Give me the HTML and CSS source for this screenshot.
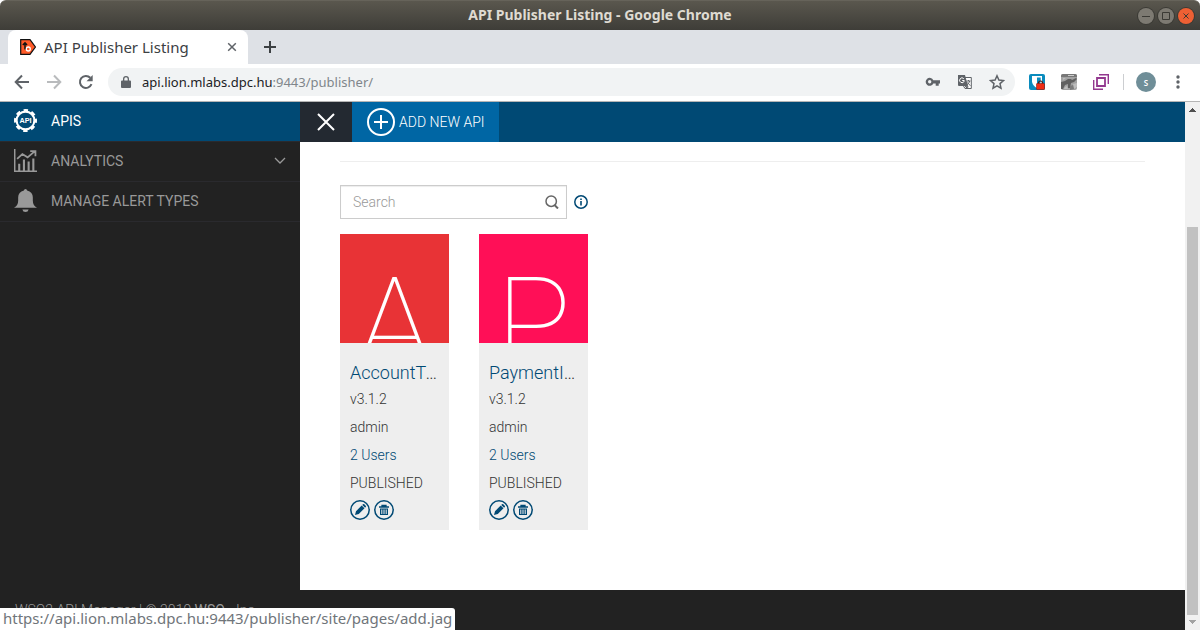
FILE: index.html
```html
<!DOCTYPE html>
<html lang="en">
<head>
<meta charset="utf-8">
<title>API Publisher Listing</title>
<link rel="stylesheet" href="styles.css">
</head>
<body>
<svg class="defs" aria-hidden="true">
  <symbol id="edit" viewBox="0 0 20 20"><circle cx="10" cy="10" r="9.2" fill="none" stroke="currentColor" stroke-width="1.5"/><path fill="currentColor" d="M5 15l1-3.8 5.700-5.700 2.800 2.800-5.700 5.700zM12.300 4.900l.6-.6q.7-.6 1.400 0l1.400 1.400q.6.7 0 1.400l-.6.6z"/></symbol>
  <symbol id="trash" viewBox="0 0 20 20"><circle cx="10" cy="10" r="9.200" fill="none" stroke="currentColor" stroke-width="1.5"/><path fill="none" stroke="currentColor" stroke-width="1.300" d="M5 7h10M8 6.500V5.500h4v1"/><path fill="currentColor" fill-rule="evenodd" d="M6 8.500h8V15H6zM7.300 9.500v4.500h1V9.500zM9.500 9.500v4.500h1V9.500zM11.700 9.500v4.500h1V9.500z"/></symbol>
</svg>

<header class="titlebar">
  <h1 class="window-title">API Publisher Listing - Google Chrome</h1>
  <div class="window-buttons">
    <button class="wbtn" aria-label="Minimize"><svg viewBox="0 0 16 16"><path d="M4 8.500h8"/></svg></button>
    <button class="wbtn" aria-label="Maximize"><svg viewBox="0 0 16 16"><path d="M4.500 4.500h7v7h-7z"/></svg></button>
    <button class="wbtn wbtn-close" aria-label="Close"><svg viewBox="0 0 16 16"><path d="M5.500 5.500l5 5m0-5l-5 5"/></svg></button>
  </div>
</header>

<div class="tabstrip">
  <div class="tab">
    <svg class="favicon" viewBox="0 0 16 16"><path d="M.7.700H10L15.400 8 10 15.300H.7z" fill="#ff5a28" stroke="#111" stroke-width="1.200"/><path d="M5 10.500V4M2.800 6L5 3.800 7 6M5 9.500h1.500" fill="none" stroke="#111" stroke-width="1.500"/><circle cx="8.300" cy="10" r="2" fill="none" stroke="#fff" stroke-width="1.300"/></svg>
    <span class="tab-title">API Publisher Listing</span>
    <button class="tab-close" aria-label="Close tab"><svg viewBox="0 0 10 10"><path d="M1.200 1.200l7.600 7.600m0-7.600L1.200 8.800"/></svg></button>
  </div>
  <button class="new-tab" aria-label="New tab"><svg viewBox="0 0 12 12"><path d="M6 0v12M0 6h12"/></svg></button>
</div>

<div class="toolbar">
  <button class="nav" aria-label="Back"><svg viewBox="0 0 16 16"><path d="M15 8H2M8 1.500L1.700 8 8 14.500"/></svg></button>
  <button class="nav nav-off" aria-label="Forward"><svg viewBox="0 0 16 16"><path d="M1 8h13M8 1.500L14.300 8 8 14.500"/></svg></button>
  <button class="nav" aria-label="Reload"><svg viewBox="0 0 16 16"><path d="M13.500 10.200A6 6 0 1 1 12.300 3.800"/><path d="M14.700 1v6.200H8.500z" fill="currentColor" stroke="none"/></svg></button>
  <div class="omnibox">
    <svg class="lock" viewBox="0 0 10 12"><path fill="#5f6368" fill-rule="evenodd" d="M1 4.500h1V3a3 3 0 0 1 6 0v1.500h1q1 0 1 1V11q0 1-1 1H1q-1 0-1-1V5.500q0-1 1-1zM3.300 4.500h3.400V3a1.700 1.700 0 0 0-3.400 0z"/></svg>
    <span class="url">api.lion.mlabs.dpc.hu<span class="url-path">:9443/publisher/</span></span>
    <button class="omni-btn" aria-label="Saved passwords"><svg viewBox="0 0 16 16"><path fill="#5f6368" fill-rule="evenodd" d="M8.300 6.200H15V9.500h-1.300v2.300h-3V9.500H8.300A4 4 0 1 1 8.300 6.200zM3 7.800a1.700 1.700 0 1 0 3.400 0 1.700 1.700 0 1 0-3.400 0z"/></svg></button>
    <button class="omni-btn" aria-label="Translate"><svg viewBox="0 0 16 16"><path d="M6 3.500h8.300v11H8L6.500 12" fill="#fff" stroke="#5f6368"/><path d="M1 1h7l3 11H2q-1 0-1-1z" fill="#5f6368"/><path d="M7.500 6.500H5.200M7.300 7A2.400 2.400 0 1 1 6.800 4.700" fill="none" stroke="#fff"/><path d="M9.500 7h4M11.500 6v1M12.700 7q-.5 2.500-3 4M10.500 8.500q1 2 3 3M8 12.300l2.500 2 .5-2z" fill="none" stroke="#5f6368"/></svg></button>
    <button class="omni-btn" aria-label="Bookmark"><svg viewBox="0 0 16 16"><path d="M8 1.800l1.900 4.300 4.600.4-3.500 3.100 1 4.600-4-2.400-4 2.400 1-4.600L1.500 6.500l4.600-.4z" fill="none" stroke="#5f6368" stroke-width="1.500"/></svg></button>
  </div>
  <div class="extensions">
    <button class="ext" aria-label="Password manager"><svg viewBox="0 0 16 16"><rect width="16" height="16" rx="2" fill="#0a8bbd"/><path d="M3 2h10v6q-1 4-5 6-4-2-5-6z" fill="#fff"/><path d="M8 3.500h3.700V8q-.7 2.500-3.700 4z" fill="#0a8bbd"/><path d="M9.500 10V9a2 2 0 0 1 4 0v1" fill="none" stroke="#4b1a14" stroke-width="1.200"/><rect x="7.500" y="9.500" width="8" height="6" rx=".5" fill="#f02c14" stroke="#8c1b10" stroke-width=".6"/></svg></button>
    <button class="ext" aria-label="Page tool"><svg viewBox="0 0 16 16"><rect width="16" height="16" rx="2" fill="#a2a2a2"/><path d="M0 2q0-2 2-2h12q2 0 2 2v1H0z" fill="#777"/><path d="M7 1h6v1H7z" fill="#ccc"/><path d="M0 8l4-1 3-2h3l1 1 4-2 1 1-3 3-3 1-1 5H7l0-4-3 1-2 4H0z" fill="#606060"/><path d="M2 4h3l-3 2zM4 13l2-1 1 3H3zM12 10l4-1v4l-3 2z" fill="#bdbdbd"/><path d="M9 12l3-1 1 4-4 1z" fill="#7c7c7c"/></svg></button>
    <button class="ext" aria-label="Windows"><svg viewBox="0 0 16 16" fill="none" stroke="#93388f"><path d="M4 4h8v8H4z" stroke-width="1.800"/><path d="M6 .7h9.300V10M.7 6v9.300H10" stroke-width="1.400"/><path d="M5.500 2.500h8v8M2.500 5.500v8h8" stroke="#fff" stroke-width="1"/></svg></button>
  </div>
  <span class="divider"></span>
  <button class="avatar" aria-label="Profile">S</button>
  <button class="menu" aria-label="Chrome menu"><svg viewBox="0 0 4 14"><circle cx="2" cy="2" r="1.700"/><circle cx="2" cy="7" r="1.700"/><circle cx="2" cy="12" r="1.700"/></svg></button>
</div>

<div class="viewport">
  <div class="page">
    <div class="columns">
      <nav class="sidebar">
        <a class="item active" href="#apis">
          <svg class="item-icon" viewBox="0 0 22 22"><circle cx="11" cy="11" r="8.500" fill="none" stroke="#fff" stroke-width="2"/><circle cx="11" cy="11" r="9.800" fill="none" stroke="#fff" stroke-width="2.400" stroke-dasharray="4.200 3.497" stroke-dashoffset="2.100"/><text x="11" y="13.500" class="gear-text">API</text></svg>
          <span>APIS</span>
        </a>
        <a class="item" href="#analytics">
          <svg class="item-icon" viewBox="0 0 22 22"><path d="M.7 0v21.300H22" fill="none" stroke="currentColor" stroke-width="1.400"/><path d="M4 14h2v7H4zM8.500 10h2v11h-2zM13 12h2v9h-2zM17.500 9h2v12h-2z" fill="currentColor"/><path d="M3 9.500l5-4.700 5 3.200 7-6M15.500 2h5v5" fill="none" stroke="currentColor" stroke-width="1.700"/></svg>
          <span>ANALYTICS</span>
          <svg class="chevron" viewBox="0 0 12 7"><path d="M1 1l5 5 5-5"/></svg>
        </a>
        <a class="item" href="#alerts">
          <svg class="item-icon" viewBox="0 0 22 22"><path d="M0 18q4-2 4-7V8q0-5 5.500-6.500 0-1.500 1.500-1.500t1.500 1.500Q18 3 18 8v3q0 5 4 7zM8 19.500h6q-.5 2.500-3 2.500t-3-2.500z" fill="currentColor"/></svg>
          <span>MANAGE ALERT TYPES</span>
        </a>
      </nav>
      <div class="content">
        <div class="actionbar">
          <button class="collapse" aria-label="Close sidebar"><svg viewBox="0 0 18 18"><path d="M1 1l16 16M17 1L1 17"/></svg></button>
          <a class="add" href="#add"><svg viewBox="0 0 28 28"><circle cx="14" cy="14" r="13"/><path d="M14 7v14M7 14h14"/></svg>ADD NEW API</a>
        </div>
        <main class="main">
          <hr class="rule">
          <form class="search-row">
            <div class="search">
              <input class="search-input" type="text" placeholder="Search" aria-label="Search">
              <button class="search-btn" type="button" aria-label="Search"><svg viewBox="0 0 14 14"><circle cx="6.200" cy="6.200" r="5.200"/><path d="M9.500 10l3.500 3.500" stroke-width="2"/></svg></button>
            </div>
            <button class="info" type="button" aria-label="Search help"><svg viewBox="0 0 14 14"><circle cx="7" cy="7" r="6.200" fill="none" stroke="currentColor" stroke-width="1.500"/><path fill="currentColor" d="M6.200 3.500h1.600v1.400H6.200zM6.200 6h1.600v4.500H6.200z"/></svg></button>
          </form>
          <div class="cards">
            <article class="card">
              <div class="thumb thumb-red"><span>A</span></div>
              <div class="card-body">
                <h2 class="card-title"><a href="#account">AccountTransactions</a></h2>
                <p>v3.1.2</p>
                <p>admin</p>
                <p><a href="#users">2 Users</a></p>
                <p>PUBLISHED</p>
                <div class="card-actions">
                  <button aria-label="Edit"><svg><use href="#edit"/></svg></button>
                  <button aria-label="Delete"><svg><use href="#trash"/></svg></button>
                </div>
              </div>
            </article>
            <article class="card">
              <div class="thumb thumb-pink"><span>P</span></div>
              <div class="card-body">
                <h2 class="card-title"><a href="#payment">PaymentInitiation</a></h2>
                <p>v3.1.2</p>
                <p>admin</p>
                <p><a href="#users">2 Users</a></p>
                <p>PUBLISHED</p>
                <div class="card-actions">
                  <button aria-label="Edit"><svg><use href="#edit"/></svg></button>
                  <button aria-label="Delete"><svg><use href="#trash"/></svg></button>
                </div>
              </div>
            </article>
          </div>
        </main>
      </div>
    </div>
    <footer class="footer">WSO2 API Manager | © 2019 <b>WSO</b>₂, Inc.</footer>
  </div>
  <div class="scrollbar">
    <svg viewBox="0 0 7 4" fill="#505050"><path d="M3 0h1v1h1v1h1v1h1v1H0V3h1V2h1V1h1z"/></svg>
    <div class="track"><div class="thumb-bar"></div></div>
    <svg viewBox="0 0 7 4" fill="#a3a3a3"><path d="M0 0h7v1H6v1H5v1H4v1H3V3H2V2H1V1H0z"/></svg>
  </div>
  <div class="status">https://api.lion.mlabs.dpc.hu:9443/publisher/site/pages/add.jag</div>
</div>
</body>
</html>
```
FILE: styles.css
```css
* { box-sizing: border-box; }
body {
  margin: 0;
  height: 100vh;
  display: flex;
  flex-direction: column;
  overflow: hidden;
  background: #fff;
  font-family: "Noto Sans", sans-serif;
}
button {
  padding: 0;
  border: 0;
  background: none;
  color: inherit;
  font: inherit;
  display: flex;
  align-items: center;
  justify-content: center;
  flex: none;
}
a { color: inherit; text-decoration: none; }
svg { display: block; flex: none; }
.defs { display: none; }

/* Window title */
.titlebar {
  flex: none;
  height: 30px;
  display: grid;
  grid-template-columns: 1fr auto 1fr;
  align-items: center;
  padding: 0 6px;
  border-radius: 6px 6px 0 0;
  border-top: 1px solid #66635a;
  background: linear-gradient(#5a574e, #3e3d38);
}
.window-title {
  grid-column: 2;
  margin: 0;
  padding-bottom: 2px;
  font-size: 14px;
  line-height: 20px;
  font-weight: 700;
  color: #dfdbd2;
}
.window-buttons { display: flex; justify-content: flex-end; gap: 4px; }
.wbtn {
  width: 16px;
  height: 16px;
  border-radius: 50%;
  background: #7d7a72;
  box-shadow: 0 0 0 1px #3b3a35;
}
.wbtn svg { width: 16px; height: 16px; fill: none; stroke: #3b3a35; }
.wbtn-close { background: #ee6034; }

/* Tabs */
.tabstrip {
  flex: none;
  height: 34px;
  display: flex;
  align-items: center;
  padding-left: 8px;
  background: #dee1e6;
}
.tab {
  width: 240px;
  height: 34px;
  display: flex;
  align-items: center;
  gap: 8px;
  padding: 0 11px 0 12px;
  border-radius: 8px 8px 0 0;
  background: #fff;
}
.favicon { width: 16px; height: 16px; }
.tab-title { flex: 1; font-size: 15px; line-height: 20px; color: #3c4043; }
.tab-close svg { width: 10px; height: 10px; stroke: #5f6368; stroke-width: 1.500; }
.new-tab { width: 28px; height: 28px; margin-left: 8px; }
.new-tab svg { width: 12px; height: 12px; stroke: #3c4043; stroke-width: 2; }

/* Address bar */
.toolbar {
  flex: none;
  height: 38px;
  display: flex;
  align-items: center;
  padding: 0 20px 1px 14px;
  border-bottom: 1px solid #b5b5b5;
}
.nav { width: 16px; height: 28px; margin-right: 16px; color: #5f6368; }
.nav-off { color: #b9bbbd; }
.nav svg { width: 16px; height: 16px; fill: none; stroke: currentColor; stroke-width: 2; }
.nav + .omnibox { margin-left: -2px; }
.omnibox {
  flex: 1;
  height: 28px;
  display: flex;
  align-items: center;
  padding: 0 10px 0 13px;
  border-radius: 14px;
  background: #f1f3f4;
}
.lock { width: 10px; height: 12px; margin-right: 11px; }
.url { flex: 1; font-size: 13px; line-height: 20px; color: #202124; }
.url-path { color: #80868b; }
.omni-btn { width: 16px; height: 16px; margin-left: 16px; }
.omni-btn svg { width: 16px; height: 16px; }
.extensions { display: flex; gap: 16px; margin: 0 14px; }
.ext svg { width: 16px; height: 16px; }
.divider { width: 1px; height: 16px; background: #ccced1; }
.avatar {
  width: 20px;
  height: 20px;
  margin: 0 20px 0 12px;
  border-radius: 50%;
  background: #6f8e98;
  color: #fff;
  font-size: 8px;
  font-weight: 600;
}
.menu svg { width: 4px; height: 14px; fill: #5f6368; }

/* Page */
.viewport {
  position: relative;
  flex: 1;
  min-height: 0;
  display: flex;
  font-family: Roboto, sans-serif;
  font-size: 14px;
}
.page { flex: 1; display: flex; flex-direction: column; min-width: 0; }
.columns { flex: 1; display: flex; min-height: 0; }
.sidebar { flex: none; width: 300px; background: #222; color: #999; }
.item {
  height: 40px;
  display: flex;
  align-items: center;
  gap: 14px;
  padding: 0 14px 2px;
  border-bottom: 1px solid #2a2a2e;
}
.item.active { background: #004974; color: #fff; }
.item-icon { width: 23px; height: 23px; }
.gear-text { font: bold 7px "Liberation Sans", sans-serif; fill: #fff; text-anchor: middle; }
.chevron { width: 12px; height: 7px; margin-left: auto; fill: none; stroke: #999; stroke-width: 1.300; }

.content { flex: 1; display: flex; flex-direction: column; min-width: 0; }
.actionbar { height: 40px; display: flex; background: #004974; color: #fff; }
.collapse { width: 52px; background: #232931; }
.collapse svg { width: 18px; height: 18px; stroke: #fff; stroke-width: 2; }
.add {
  display: flex;
  align-items: center;
  gap: 4px;
  padding: 0 15px 1px;
  background: #0066a4;
  font-weight: 300;
}
.add svg { width: 28px; height: 28px; fill: none; stroke: #fff; stroke-width: 2; }

.main { flex: 1; padding: 19px 40px 40px; }
.rule { margin: 0 0 23px; border: 0; border-top: 1px solid #eee; }
.search-row { display: flex; align-items: center; gap: 7px; }
.search {
  width: 227px;
  height: 34px;
  display: flex;
  border: 1px solid #ccc;
  box-shadow: inset 0 1px 1px #00000013;
}
.search-input {
  flex: 1;
  min-width: 0;
  padding: 0 12px;
  border: 0;
  background: none;
  font: 300 14px Roboto, sans-serif;
}
.search-input::placeholder { color: #999; }
.search-btn { width: 28px; color: #666; }
.search-btn svg { width: 14px; height: 14px; fill: none; stroke: currentColor; stroke-width: 1.500; }
.info { color: #004974; }
.info svg { width: 14px; height: 14px; }

.cards { display: flex; gap: 30px; margin-top: 15px; }
.card { width: 109px; background: #eee; }
.thumb {
  height: 109px;
  overflow: hidden;
  color: #fff;
  text-align: center;
  font-weight: 100;
  font-size: 125px;
  line-height: 178px;
}
.thumb-red { background: #e83336; }
.thumb-pink { background: #ff0f57; }
.card-body { padding: 18px 10px 10px; font-weight: 300; color: #333; }
.card-body p { margin: 0; line-height: 28px; }
.card-body a { color: #004974; }
.card-title {
  margin: 0;
  overflow: hidden;
  text-overflow: ellipsis;
  white-space: nowrap;
  font-size: 18px;
  line-height: 24px;
  font-weight: 300;
}
.card-actions { display: flex; gap: 4px; padding-top: 3px; color: #004974; }
.card-actions svg { width: 20px; height: 20px; }

.footer {
  flex: none;
  height: 40px;
  padding: 0 15px;
  background: #222;
  color: #999;
  font-weight: 300;
  line-height: 40px;
}

.scrollbar {
  flex: none;
  width: 15px;
  display: flex;
  flex-direction: column;
  align-items: center;
  padding: 6px 2px;
  background: #f1f1f1;
}
.scrollbar svg { width: 7px; height: 4px; }
.track { flex: 1; width: 11px; display: flex; align-items: flex-end; padding: 5px 0; }
.thumb-bar { width: 11px; height: 78%; background: #c1c1c1; }

.status {
  position: absolute;
  left: 0;
  bottom: 0;
  padding: 0 3px 2px;
  border-top-right-radius: 3px;
  background: #fff;
  color: #70757a;
  font: 15px/20px "Noto Sans", sans-serif;
}
```
